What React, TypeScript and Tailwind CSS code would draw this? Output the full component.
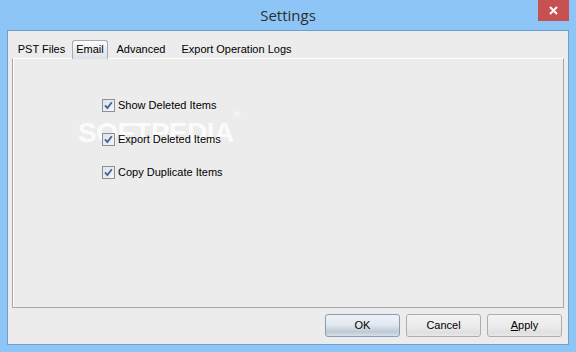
import React from "react";

function Check({ label }: { label: string }) {
  return (
    <div className="flex items-center h-[13px]">
      <div className="w-[13px] h-[13px] border border-[#8e8f8f] bg-[linear-gradient(135deg,#dde3ea,#f4f6f8)] flex items-center justify-center">
        <svg width="11" height="11" viewBox="0 0 11 11">
          <polyline points="2,5.3 4.4,8 8.8,2.2" fill="none" stroke="#40629a" strokeWidth="1.8" strokeLinejoin="miter" />
        </svg>
      </div>
      <span className="ml-[3px] text-[11px] leading-none text-black">{label}</span>
    </div>
  );
}

function Btn({ children, primary }: { children: React.ReactNode; primary?: boolean }) {
  return (
    <div
      className={
        primary
          ? "w-[75px] h-[23px] rounded-[3px] border border-[#8a9cb2] bg-[linear-gradient(#edf2f7_0%,#e3e9f0_45%,#bfcad6_80%,#d8e0e8_100%)] flex items-center justify-center text-[11px] text-black"
          : "w-[75px] h-[23px] rounded-[3px] border border-[#adadad] bg-[linear-gradient(#f3f3f3_0%,#ececec_50%,#e0e0e0_85%,#e8e8e8_100%)] flex items-center justify-center text-[11px] text-black"
      }
    >
      {children}
    </div>
  );
}

export default function App() {
  return (
    <div className="w-[576px] h-[352px] bg-[#8cc5f6] flex flex-col font-['Liberation_Sans',Arial,sans-serif] overflow-hidden">
      <div className="h-[30px] grid grid-cols-[38px_1fr_38px] items-start">
        <div />
        <div className="h-[30px] flex items-center justify-center">
          <span className="text-[15px] leading-none text-[#2e2e2e] font-['Open_Sans',sans-serif]">Settings</span>
        </div>
        <div className="w-[31px] h-[21px] bg-[#c75050] flex items-center justify-center">
          <svg width="9" height="9" viewBox="0 0 9 9">
            <path d="M1 1 L8 8 M8 1 L1 8" stroke="#ffffff" strokeWidth="2" />
          </svg>
        </div>
      </div>
      <div className="mx-[7px] mb-[7px] h-[315px] border border-[#6d9fd0] bg-[#ececec] flex flex-col">
        <div className="h-[27px] flex items-end pl-[6px]">
          <div className="w-[55px] h-[18px] flex items-center justify-center text-[11px] leading-none text-black">PST Files</div>
          <div className="ml-[3px] w-[36px] h-[19px] -mb-px relative z-10 rounded-t-[3px] border border-b-0 border-[#a3abb5] bg-[linear-gradient(#fdfdfd,#e6eaee_60%,#dde3e9)] flex items-center justify-center text-[11px] leading-none text-black pb-[1px]">Email</div>
          <div className="w-[66px] h-[18px] flex items-center justify-center text-[11px] leading-none text-black">Advanced</div>
          <div className="w-[125px] h-[18px] flex items-center justify-center text-[11px] leading-none text-black">Export Operation Logs</div>
        </div>
        <div className="mx-[4px] h-[250px] relative border border-[#a7a7a7] border-t-white shadow-[inset_1px_0_0_#ffffff]">
          <div className="absolute left-[65px] top-[60px] text-[28px] leading-none font-bold tracking-[-0.5px] text-white/80 select-none">
            SOFTPEDIA<sup className="text-[9px] font-normal align-top">®</sup>
          </div>
          <div className="flex flex-col pl-[89px] pt-[40px] relative">
            <Check label="Show Deleted Items" />
            <div className="mt-[21px]">
              <Check label="Export Deleted Items" />
            </div>
            <div className="mt-[20px]">
              <Check label="Copy Duplicate Items" />
            </div>
          </div>
        </div>
        <div className="mt-[6px] flex justify-end gap-[6px] pr-[6px]">
          <Btn primary>OK</Btn>
          <Btn>Cancel</Btn>
          <Btn>
            <span><span className="underline">A</span>pply</span>
          </Btn>
        </div>
      </div>
    </div>
  );
}
